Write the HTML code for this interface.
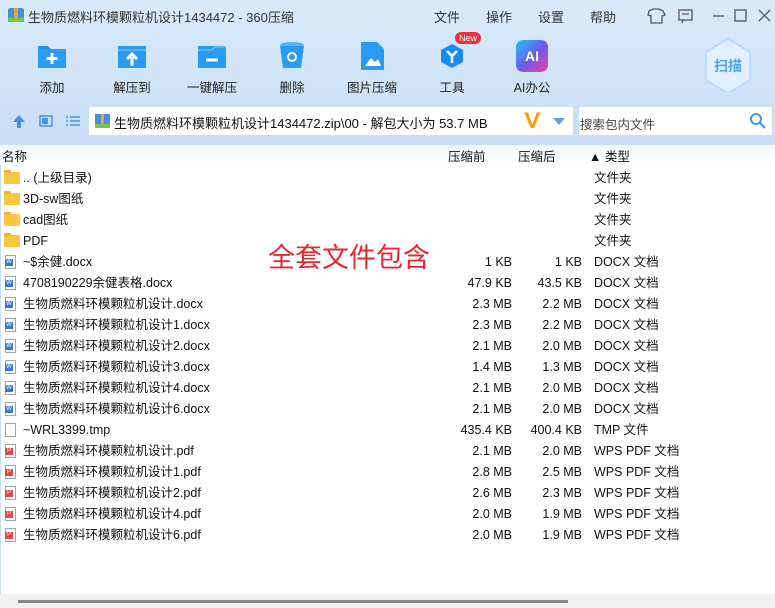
<!DOCTYPE html>
<html><head><meta charset="utf-8"><style>
body{margin:0;width:775px;height:608px;overflow:hidden;font-family:"Liberation Sans","Noto Sans CJK SC",sans-serif;font-size:12.5px;color:#111;background:#fff;position:relative}
.top{position:absolute;left:0;top:0;width:775px;height:145px;background:linear-gradient(#d9eafb,#c8def6)}
.abs{position:absolute}
.tb{position:absolute;top:40px;width:80px;text-align:center;font-size:12.5px;color:#222}
.tb .ic{display:block;margin:0 auto 5px;width:32px;height:32px}
.row{position:absolute;left:0;width:775px;height:21px;line-height:21px}
.row span{position:absolute}
.n{left:23px}.s{right:263px}.c{right:193px}.t{left:594px}
.fold{position:absolute;left:4px;top:4px;width:16px;height:12px;background:#f8c640;border-radius:1px}
.fold:before{content:"";position:absolute;left:0;top:-2px;width:7px;height:3px;background:#f0b430;border-radius:1px 1px 0 0}
.doc{position:absolute;left:5px;top:3px;width:11px;height:14px;border:1px solid #9aa;background:#fff;box-sizing:border-box}
.doc i{position:absolute;left:-1px;top:3px;width:8px;height:7px;background:#3a78d8;color:#fff;font-size:6px;line-height:7px;text-align:center;font-style:normal}
.pdf i{background:#e8474a}
</style></head><body>
<div class="top"></div>
<div class="abs" style="left:8px;top:8px;width:16px;height:14px;background:#4a90d9;border-radius:2px"><div style="position:absolute;left:6px;top:0;width:4px;height:14px;background:#e8a533"></div><div style="position:absolute;left:0;bottom:0;width:16px;height:4px;background:#7cc34c"></div></div>
<div class="abs" style="left:28px;top:7px;font-size:13px;color:#333">生物质燃料环模颗粒机设计1434472 - 360压缩</div>
<div class="abs" style="left:434px;top:7px;font-size:13px;color:#333">文件</div>
<div class="abs" style="left:486px;top:7px;font-size:13px;color:#333">操作</div>
<div class="abs" style="left:538px;top:7px;font-size:13px;color:#333">设置</div>
<div class="abs" style="left:590px;top:7px;font-size:13px;color:#333">帮助</div>
<svg class="abs" style="left:645px;top:6px" width="130" height="20" fill="none" stroke="#555" stroke-width="1.3"><path d="M4 5l4-2h6l4 2 2 4-3 1v7H6v-7l-3-1z"/><rect x="34" y="4" width="13" height="10"/><path d="M37 8h7M38 14l-1 3"/><path d="M68 10h11"/><rect x="90" y="4" width="11" height="11"/><path d="M114 4l11 11M125 4l-11 11"/></svg>
<div class="tb" style="left:12px"><svg class="ic" viewBox="0 0 32 32"><path d="M2 6h10l3 3h15v19H2z" fill="#1e8ff0"/><path d="M2 9h28v19H2z" fill="#2a9bf5"/><path d="M16 13v11M10.5 18.5h11" stroke="#fff" stroke-width="3"/></svg>添加</div>
<div class="tb" style="left:92px"><svg class="ic" viewBox="0 0 32 32"><path d="M2 6h28v22H2z" fill="#2a9bf5"/><path d="M2 10h28" stroke="#8ccaff"/><path d="M16 26v-9M11 19l5-5 5 5" stroke="#fff" stroke-width="3" fill="none"/></svg>解压到</div>
<div class="tb" style="left:172px"><svg class="ic" viewBox="0 0 32 32"><path d="M2 6h28v22H2z" fill="#2a9bf5"/><path d="M2 10h14l3-3h11" stroke="#8ccaff" fill="none"/><path d="M10 20h12" stroke="#fff" stroke-width="3"/></svg>一键解压</div>
<div class="tb" style="left:252px"><svg class="ic" viewBox="0 0 32 32"><ellipse cx="16" cy="5" rx="12" ry="3" fill="#5bb6fa"/><path d="M4 6h24l-3 22H7z" fill="#2a9bf5"/><circle cx="16" cy="17" r="4" stroke="#fff" stroke-width="2" fill="none"/></svg>删除</div>
<div class="tb" style="left:332px"><svg class="ic" viewBox="0 0 32 32"><path d="M5 2h16l7 7v21H5z" fill="#2a9bf5"/><path d="M9 26l6-8 4 4 3-3 3 7z" fill="#fff"/></svg>图片压缩</div>
<div class="tb" style="left:412px"><svg class="ic" viewBox="0 0 32 32"><path d="M16 4l11 6v12l-11 6-11-6V10z" fill="#1a8cf0"/><path d="M11 11l5 5 5-5M16 16v7" stroke="#fff" stroke-width="2.5" fill="none"/></svg>工具</div>
<div class="abs" style="left:455px;top:32px;background:#f0303a;color:#fff;font-size:9px;border-radius:7px;padding:0 4px;line-height:12px">New</div>
<div class="tb" style="left:492px"><div class="ic" style="border-radius:7px;background:linear-gradient(135deg,#20c8f0,#6a5cf0,#f040a0);color:#fff;font-weight:bold;font-size:14px;line-height:32px">AI</div>AI办公</div>
<svg class="abs" style="left:703px;top:37px" width="50" height="58"><path d="M25 2l22 13v28L25 56 3 43V15z" fill="#e0f0ff" stroke="#b8dcfa" stroke-width="2"/><text x="25" y="34" text-anchor="middle" font-size="14" font-weight="bold" fill="#4aa4ee" font-family="Noto Sans CJK SC">扫描</text></svg>
<svg class="abs" style="left:12px;top:113px" width="70" height="16"><path d="M7 2l6 7H9v6H5V9H1z" fill="#4a90e0"/><rect x="28" y="3" width="12" height="10" fill="none" stroke="#4a90e0" stroke-width="1.5"/><rect x="30" y="5" width="6" height="6" fill="#4a90e0"/><path d="M54 4h2M54 8h2M54 12h2M58 4h10M58 8h10M58 12h10" stroke="#4a90e0" stroke-width="1.5"/></svg>
<div class="abs" style="left:89px;top:107px;width:484px;height:28px;background:#fff"></div>
<div class="abs" style="left:95px;top:114px;width:15px;height:14px;background:#4a90d9"><div style="position:absolute;left:6px;width:3px;height:14px;background:#e8a533"></div><div style="position:absolute;bottom:0;width:15px;height:4px;background:#7cc34c"></div></div>
<div class="abs" style="left:114px;top:113px;font-size:13px">生物质燃料环模颗粒机设计1434472.zip\00 - 解包大小为 53.7 MB</div>
<div class="abs" style="left:525px;top:108px;font-size:22px;font-weight:bold;color:#f5a000;transform:scaleX(1.1)">V</div>
<div class="abs" style="left:553px;top:118px;border:6px solid transparent;border-top:7px solid #6a9ee0;border-bottom:0"></div>
<div class="abs" style="left:579px;top:107px;width:193px;height:28px;background:#fff"></div>
<div class="abs" style="left:580px;top:114px;font-size:12.5px;color:#444">搜索包内文件</div>
<svg class="abs" style="left:749px;top:112px" width="18" height="18" fill="none" stroke="#4a90e0" stroke-width="2"><circle cx="7" cy="7" r="5"/><path d="M11 11l5 5"/></svg>
<div class="abs" style="left:0;top:145px;width:775px;height:20px;background:linear-gradient(#f2f7fd,#fff)"></div>
<div class="abs" style="left:2px;top:146px">名称</div>
<div class="abs" style="left:448px;top:146px">压缩前</div>
<div class="abs" style="left:518px;top:146px">压缩后</div>
<div class="abs" style="left:589px;top:146px">▲ 类型</div>
<div class="abs" style="left:0;top:165px;width:1px;height:430px;background:#c8def6"></div>
<div class="row" style="top:168px"><div class="fold"></div><span class="n">.. (上级目录)</span><span class="t">文件夹</span></div>
<div class="row" style="top:189px"><div class="fold"></div><span class="n">3D-sw图纸</span><span class="t">文件夹</span></div>
<div class="row" style="top:210px"><div class="fold"></div><span class="n">cad图纸</span><span class="t">文件夹</span></div>
<div class="row" style="top:231px"><div class="fold"></div><span class="n">PDF</span><span class="t">文件夹</span></div>
<div class="row" style="top:252px"><div class="doc"><i>W</i></div><span class="n">~$余健.docx</span><span class="s">1 KB</span><span class="c">1 KB</span><span class="t">DOCX 文档</span></div>
<div class="row" style="top:273px"><div class="doc"><i>W</i></div><span class="n">4708190229余健表格.docx</span><span class="s">47.9 KB</span><span class="c">43.5 KB</span><span class="t">DOCX 文档</span></div>
<div class="row" style="top:294px"><div class="doc"><i>W</i></div><span class="n">生物质燃料环模颗粒机设计.docx</span><span class="s">2.3 MB</span><span class="c">2.2 MB</span><span class="t">DOCX 文档</span></div>
<div class="row" style="top:315px"><div class="doc"><i>W</i></div><span class="n">生物质燃料环模颗粒机设计1.docx</span><span class="s">2.3 MB</span><span class="c">2.2 MB</span><span class="t">DOCX 文档</span></div>
<div class="row" style="top:336px"><div class="doc"><i>W</i></div><span class="n">生物质燃料环模颗粒机设计2.docx</span><span class="s">2.1 MB</span><span class="c">2.0 MB</span><span class="t">DOCX 文档</span></div>
<div class="row" style="top:357px"><div class="doc"><i>W</i></div><span class="n">生物质燃料环模颗粒机设计3.docx</span><span class="s">1.4 MB</span><span class="c">1.3 MB</span><span class="t">DOCX 文档</span></div>
<div class="row" style="top:378px"><div class="doc"><i>W</i></div><span class="n">生物质燃料环模颗粒机设计4.docx</span><span class="s">2.1 MB</span><span class="c">2.0 MB</span><span class="t">DOCX 文档</span></div>
<div class="row" style="top:399px"><div class="doc"><i>W</i></div><span class="n">生物质燃料环模颗粒机设计6.docx</span><span class="s">2.1 MB</span><span class="c">2.0 MB</span><span class="t">DOCX 文档</span></div>
<div class="row" style="top:420px"><div class="doc"></div><span class="n">~WRL3399.tmp</span><span class="s">435.4 KB</span><span class="c">400.4 KB</span><span class="t">TMP 文件</span></div>
<div class="row" style="top:441px"><div class="doc pdf"><i>P</i></div><span class="n">生物质燃料环模颗粒机设计.pdf</span><span class="s">2.1 MB</span><span class="c">2.0 MB</span><span class="t">WPS PDF 文档</span></div>
<div class="row" style="top:462px"><div class="doc pdf"><i>P</i></div><span class="n">生物质燃料环模颗粒机设计1.pdf</span><span class="s">2.8 MB</span><span class="c">2.5 MB</span><span class="t">WPS PDF 文档</span></div>
<div class="row" style="top:483px"><div class="doc pdf"><i>P</i></div><span class="n">生物质燃料环模颗粒机设计2.pdf</span><span class="s">2.6 MB</span><span class="c">2.3 MB</span><span class="t">WPS PDF 文档</span></div>
<div class="row" style="top:504px"><div class="doc pdf"><i>P</i></div><span class="n">生物质燃料环模颗粒机设计4.pdf</span><span class="s">2.0 MB</span><span class="c">1.9 MB</span><span class="t">WPS PDF 文档</span></div>
<div class="row" style="top:525px"><div class="doc pdf"><i>P</i></div><span class="n">生物质燃料环模颗粒机设计6.pdf</span><span class="s">2.0 MB</span><span class="c">1.9 MB</span><span class="t">WPS PDF 文档</span></div>
<div class="abs" style="left:268px;top:236px;font-size:27px;color:#e8282c;font-family:'Noto Sans CJK SC',sans-serif">全套文件包含</div>
<div class="abs" style="left:0;top:594px;width:775px;height:14px;background:#f0f0f0"></div>
<div class="abs" style="left:18px;top:600px;width:550px;height:3px;background:#888"></div>
</body></html>
